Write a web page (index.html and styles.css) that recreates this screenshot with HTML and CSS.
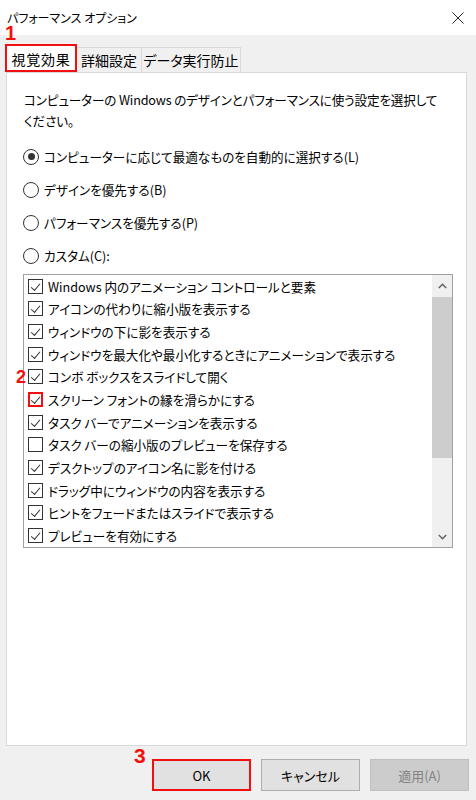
FILE: index.html
```html
<!DOCTYPE html>
<html lang="ja">
<head>
<meta charset="utf-8">
<title>パフォーマンス オプション</title>
<link rel="stylesheet" href="styles.css">
</head>
<body>
<div class="window">
  <div class="titlebar">
    <span class="title">パフォーマンス オプション</span>
    <svg class="close" width="12" height="12" viewBox="0 0 12 12"><path d="M0.5 0.5 L11.5 11.5 M11.5 0.5 L0.5 11.5" stroke="#2b2b2b" stroke-width="1" fill="none"/></svg>
  </div>
  <div class="main">
    <div class="tabs">
      <div class="tab sel">視覚効果</div>
      <div class="tab t2">詳細設定</div>
      <div class="tab t3">データ実行防止</div>
    </div>
    <div class="panel">
      <p class="desc">コンピューターの Windows のデザインとパフォーマンスに使う設定を選択して<br>ください。</p>
      <div class="radios">
        <div class="radio"><span class="rb on"></span><span>コンピューターに応じて最適なものを自動的に選択する(L)</span></div>
        <div class="radio"><span class="rb"></span><span>デザインを優先する(B)</span></div>
        <div class="radio"><span class="rb"></span><span>パフォーマンスを優先する(P)</span></div>
        <div class="radio"><span class="rb"></span><span>カスタム(C):</span></div>
      </div>
      <div class="listbox">
        <ul class="items">
          <li><span class="cb on"></span>Windows 内のアニメーション コントロールと要素</li>
          <li><span class="cb on"></span>アイコンの代わりに縮小版を表示する</li>
          <li><span class="cb on"></span>ウィンドウの下に影を表示する</li>
          <li><span class="cb on"></span>ウィンドウを最大化や最小化するときにアニメーションで表示する</li>
          <li><span class="cb on"></span>コンボ ボックスをスライドして開く</li>
          <li><span class="cb on hl"></span>スクリーン フォントの縁を滑らかにする</li>
          <li><span class="cb on"></span>タスク バーでアニメーションを表示する</li>
          <li><span class="cb"></span>タスク バーの縮小版のプレビューを保存する</li>
          <li><span class="cb on"></span>デスクトップのアイコン名に影を付ける</li>
          <li><span class="cb on"></span>ドラッグ中にウィンドウの内容を表示する</li>
          <li><span class="cb on"></span>ヒントをフェードまたはスライドで表示する</li>
          <li><span class="cb on"></span>プレビューを有効にする</li>
        </ul>
        <div class="scrollbar">
          <div class="sb-btn up"><svg width="9" height="6" viewBox="0 0 9 6"><path d="M0.8 5 L4.5 1.3 L8.2 5" stroke="#606060" stroke-width="1.4" fill="none"/></svg></div>
          <div class="thumb"></div>
          <div class="track"></div>
          <div class="sb-btn down"><svg width="9" height="6" viewBox="0 0 9 6"><path d="M0.8 1 L4.5 4.7 L8.2 1" stroke="#606060" stroke-width="1.4" fill="none"/></svg></div>
        </div>
      </div>
    </div>
  </div>
  <div class="buttons">
    <div class="btn ok">OK</div>
    <div class="btn">キャンセル</div>
    <div class="btn disabled">適用(A)</div>
  </div>
  <span class="anno a1">1</span>
  <span class="anno a2">2</span>
  <span class="anno a3">3</span>
</div>
</body>
</html>
```
FILE: styles.css
```css
html, body {
  margin: 0;
  padding: 0;
}
body {
  width: 476px;
  height: 800px;
  overflow: hidden;
  background: #f0f0f0;
  font-family: "Noto Sans CJK JP", "Noto Sans", sans-serif;
  font-size: 12.6px;
  font-feature-settings: "palt";
  color: #000;
}
.window {
  position: relative;
  width: 476px;
  height: 800px;
}
.titlebar {
  height: 35px;
  background: #fff;
  display: flex;
  align-items: center;
  justify-content: space-between;
  padding: 0 12px 0 7px;
  box-sizing: border-box;
}
.title {
  font-size: 12px;
  line-height: 16px;
  color: #000;
}
.close {
  display: block;
}
.main {
  padding: 9px 9px 0 6px;
}
.tabs {
  display: flex;
  align-items: flex-end;
  height: 28px;
  font-size: 14px;
}
.tab {
  box-sizing: border-box;
  height: 25px;
  display: flex;
  align-items: center;
  justify-content: center;
  border-top: 1px solid #d9d9d9;
  border-right: 1px solid #d9d9d9;
  background: #f0f0f0;
}
.tab.sel {
  margin-left: -1px;
  width: 72px;
  height: 28px;
  border: 2px solid #f20f0f;
  background: #fff;
  padding-top: 1px;
  letter-spacing: 0.7px;
}
.tab.t2 {
  width: 65px;
}
.tab.t3 {
  width: 99px;
}
.panel {
  box-sizing: border-box;
  height: 674px;
  background: #fff;
  border: 1px solid #d9d9d9;
  padding: 16px 0 0 16px;
}
.desc {
  margin: 0 0 9px;
  padding-left: 1px;
  line-height: 21px;
  white-space: nowrap;
  letter-spacing: -0.15px;
}
.radio {
  height: 33px;
  display: flex;
  align-items: center;
  gap: 5px;
  white-space: nowrap;
}
.rb {
  box-sizing: border-box;
  width: 16px;
  height: 16px;
  border: 1px solid #333;
  border-radius: 50%;
  display: flex;
  align-items: center;
  justify-content: center;
  flex: none;
}
.rb.on::after {
  content: "";
  width: 7px;
  height: 7px;
  border-radius: 50%;
  background: #333;
}
.listbox {
  box-sizing: border-box;
  margin-top: 2px;
  width: 430px;
  height: 274px;
  border: 1px solid #a0a0a0;
  display: flex;
  background: #fff;
}
.items {
  list-style: none;
  margin: 0;
  padding: 0;
  flex: 1;
  overflow: hidden;
}
.items li {
  height: 22.67px;
  display: flex;
  align-items: center;
  gap: 5px;
  padding-left: 4px;
  white-space: nowrap;
}
.cb {
  box-sizing: border-box;
  width: 15px;
  height: 15px;
  border: 1px solid #333;
  flex: none;
  position: relative;
}
.cb.on::after {
  content: "";
  position: absolute;
  left: 4px;
  top: 0px;
  width: 4px;
  height: 8px;
  border-right: 1.4px solid #333;
  border-bottom: 1.4px solid #333;
  transform: rotate(40deg) translate(1px, 1px);
}
.cb.hl {
  border: 2px solid #f20f0f;
}
.cb.hl.on::after {
  left: 3px;
  top: -1px;
}
.scrollbar {
  width: 20px;
  background: #f0f0f0;
  display: flex;
  flex-direction: column;
}
.sb-btn {
  display: flex;
  align-items: center;
  justify-content: center;
}
.sb-btn.up {
  height: 22px;
}
.sb-btn.down {
  height: 21px;
}
.thumb {
  height: 161px;
  background: #cdcdcd;
}
.track {
  flex: 1;
}
.buttons {
  display: flex;
  justify-content: flex-end;
  gap: 10px;
  padding-right: 7px;
  margin-top: 13px;
}
.btn {
  box-sizing: border-box;
  width: 99px;
  height: 32px;
  background: #e1e1e1;
  border: 1px solid #adadad;
  display: flex;
  align-items: center;
  justify-content: center;
  font-size: 13px;
}
.btn.ok {
  border: 2px solid #f20f0f;
}
.btn.disabled {
  background: #cccccc;
  border-color: #bfbfbf;
  color: #838383;
}
.anno {
  position: absolute;
  font-family: "Liberation Sans", Arial, sans-serif;
  font-weight: bold;
  color: #f20f0f;
  line-height: 0.75;
  font-feature-settings: normal;
}
.a1 {
  left: 5px;
  top: 26px;
  font-size: 20px;
}
.a2 {
  left: 16px;
  top: 371px;
  font-size: 18px;
}
.a3 {
  left: 134px;
  top: 748px;
  font-size: 21px;
}
```
